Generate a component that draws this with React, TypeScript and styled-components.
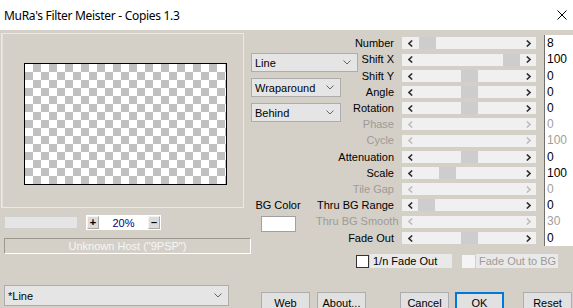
import React from "react";
import styled, { createGlobalStyle } from "styled-components";

const GlobalStyle = createGlobalStyle`
  html, body { margin: 0; padding: 0; background: #d4d0c8; }
  body { font-family: "Liberation Sans", Arial, sans-serif; font-size: 11px; color: #000; }
`;

const Window = styled.div`
  width: 573px;
  height: 308px;
  overflow: hidden;
  display: flex;
  flex-direction: column;
  background: #d4d0c8;
`;

const TitleBar = styled.div`
  height: 30px;
  flex: none;
  background: #fff;
  display: flex;
  align-items: center;
  padding-left: 4px;
  font-family: "Noto Sans", "Open Sans", sans-serif;
  font-size: 12px;
  letter-spacing: -0.3px;
  color: #000;
`;

const CloseBox = styled.div`
  margin-left: auto;
  width: 22px;
  height: 30px;
  display: flex;
  align-items: center;
  justify-content: center;
`;

const Body = styled.div`
  flex: 1;
  display: flex;
`;

const LeftColumn = styled.div`
  width: 251px;
  flex: none;
  display: flex;
  flex-direction: column;
  padding-top: 3px;
  padding-left: 1px;
  box-sizing: border-box;
`;

const GroupBox = styled.div`
  width: 243px;
  height: 175px;
  box-sizing: border-box;
  border: 1px solid #ebe9e5;
  box-shadow: inset 3px 0 0 -2px #e4e1dc;
  padding: 29px 0 0 22px;
`;

const Preview = styled.div`
  width: 203px;
  height: 122px;
  box-sizing: border-box;
  border: 1px solid #000;
  background: repeating-conic-gradient(#c0c0c0 0 25%, #fff 0 50%) 0 0 / 16px 16px;
`;

const ZoomRow = styled.div`
  display: flex;
  align-items: center;
  margin-top: 7px;
  padding-left: 3px;
  gap: 8px;
  height: 15px;
`;

const LightField = styled.div`
  width: 74px;
  height: 13px;
  box-sizing: border-box;
  background: #e5e5e5;
  border: 1px solid #d0d0d0;
`;

const ZoomBox = styled.div`
  width: 75px;
  height: 15px;
  box-sizing: border-box;
  background: #fff;
  display: flex;
  align-items: center;
  padding: 0 1px;
`;

const ZoomButton = styled.div`
  width: 12px;
  height: 13px;
  box-sizing: border-box;
  background: #dcdcdc;
  border: 1px solid #a8a8a8;
  border-top-color: #f4f4f4;
  border-left-color: #f4f4f4;
  display: flex;
  align-items: center;
  justify-content: center;
  font-size: 11px;
  font-weight: bold;
  line-height: 1;
`;

const ZoomText = styled.span`
  flex: 1;
  text-align: center;
  color: #000080;
  font-size: 11px;
`;

const HostBar = styled.div`
  margin-top: 8px;
  margin-left: 3px;
  width: 247px;
  height: 16px;
  box-sizing: border-box;
  border: 1px solid #fff;
  border-top-color: #9c9890;
  border-left-color: #9c9890;
  display: flex;
  align-items: center;
  justify-content: center;
  color: #f6f6f6;
  font-size: 11px;
`;

const Spacer = styled.div`
  flex: 1;
`;

const ComboBox = styled.div<{ $width: number; $height: number }>`
  width: ${(p) => p.$width}px;
  height: ${(p) => p.$height}px;
  flex: none;
  box-sizing: border-box;
  background: #e5e5e5;
  border: 1px solid #adadad;
  display: flex;
  align-items: center;
  padding: 0 6px 0 3px;
  font-size: 11px;
  color: #000;
`;

const BottomCombo = styled(ComboBox)`
  margin-left: 3px;
  margin-bottom: 8px;
`;

const ComboText = styled.span`
  flex: 1;
`;

const RightPane = styled.div`
  flex: 1;
  display: flex;
  flex-direction: column;
`;

const TopSection = styled.div`
  display: flex;
`;

const MidColumn = styled.div`
  width: 65px;
  flex: none;
  display: flex;
  flex-direction: column;
  align-items: flex-start;
  padding-top: 23px;
  gap: 6px;
  position: relative;
  z-index: 1;
`;

const BGGroup = styled.div`
  margin-top: 70px;
  margin-left: 3px;
  width: 48px;
  display: flex;
  flex-direction: column;
  align-items: center;
  gap: 4px;
`;

const BGLabel = styled.div`
  font-size: 11px;
  line-height: 14px;
  white-space: nowrap;
`;

const ColorSwatch = styled.div`
  width: 35px;
  height: 16px;
  box-sizing: border-box;
  background: #fff;
  border: 1px solid #a0a0a0;
`;

const ControlsGrid = styled.div`
  margin-top: 5px;
  display: grid;
  grid-template-columns: 86px 134px 37px;
  grid-template-rows: 16px 17px 16px 16px 16px 16px 17px 16px 16px 16px 16px 17px 16px;
`;

const Label = styled.div<{ $disabled?: boolean }>`
  text-align: right;
  padding-right: 8px;
  white-space: nowrap;
  font-size: 11px;
  line-height: 16px;
  color: ${(p) => (p.$disabled ? "#9d9b97" : "#000")};
`;

const Track = styled.div`
  align-self: center;
  height: 12px;
  display: flex;
  background: #f0f0f0;
`;

const ArrowCell = styled.div`
  width: 16px;
  flex: none;
  display: flex;
  align-items: center;
  justify-content: center;
`;

const Trough = styled.div`
  flex: 1;
  position: relative;
`;

const Thumb = styled.div`
  position: absolute;
  top: 0;
  bottom: 0;
  width: 17px;
  background: #cdcdcd;
`;

const ValueBox = styled.div<{ $disabled?: boolean }>`
  margin-left: 8px;
  background: #fff;
  border-left: 1px solid #6f6f6f;
  padding-left: 2px;
  font-size: 12px;
  line-height: 16px;
  color: ${(p) => (p.$disabled ? "#a0a0a0" : "#000")};
`;

const CheckRow = styled.div`
  display: flex;
  align-items: center;
  margin-top: 8px;
  padding-left: 105px;
  height: 14px;
`;

const CheckItem = styled.div<{ $offset: number }>`
  display: flex;
  align-items: center;
  margin-left: ${(p) => p.$offset}px;
`;

const CheckBox = styled.div<{ $disabled?: boolean }>`
  width: 13px;
  height: 13px;
  box-sizing: border-box;
  background: ${(p) => (p.$disabled ? "#f4f4f4" : "#fff")};
  border: 1px solid ${(p) => (p.$disabled ? "#f4f4f4" : "#333")};
`;

const CheckLabel = styled.div<{ $width: number; $disabled?: boolean }>`
  width: ${(p) => p.$width}px;
  height: 14px;
  margin-left: 1px;
  background: #e9e9e9;
  padding-left: 3px;
  box-sizing: border-box;
  font-size: 11px;
  line-height: 14px;
  white-space: nowrap;
  color: ${(p) => (p.$disabled ? "#9d9b97" : "#000")};
`;

const ButtonRow = styled.div`
  display: flex;
  margin-top: 24px;
`;

const Button = styled.div<{ $offset: number; $default?: boolean }>`
  margin-left: ${(p) => p.$offset}px;
  width: 49px;
  height: 22px;
  flex: none;
  box-sizing: border-box;
  background: #e1e1e1;
  border: ${(p) => (p.$default ? "2px solid #0078d7" : "1px solid #adadad")};
  display: flex;
  align-items: center;
  justify-content: center;
  font-size: 11px;
  color: #000;
`;

const Chevron = () => (
  <svg width="8" height="5" viewBox="0 0 8 5">
    <polyline points="0.5,0.5 4,4 7.5,0.5" fill="none" stroke="#666" strokeWidth="1" />
  </svg>
);

const Arrow = ({ dir, disabled }: { dir: "left" | "right"; disabled?: boolean }) => (
  <svg width="5" height="7" viewBox="0 0 5 7">
    <polyline
      points={dir === "left" ? "4.2,0.5 1,3.5 4.2,6.5" : "0.8,0.5 4,3.5 0.8,6.5"}
      fill="none"
      stroke={disabled ? "#bdbdbd" : "#303030"}
      strokeWidth="1.6"
    />
  </svg>
);

type Row = { label: string; pos: number | null; value: string };

const rows: Row[] = [
  { label: "Number", pos: 0.012, value: "8" },
  { label: "Shift X", pos: 1, value: "100" },
  { label: "Shift Y", pos: 0.5, value: "0" },
  { label: "Angle", pos: 0.5, value: "0" },
  { label: "Rotation", pos: 0.5, value: "0" },
  { label: "Phase", pos: null, value: "0" },
  { label: "Cycle", pos: null, value: "100" },
  { label: "Attenuation", pos: 0.5, value: "0" },
  { label: "Scale", pos: 0.25, value: "100" },
  { label: "Tile Gap", pos: null, value: "0" },
  { label: "Thru BG Range", pos: 0, value: "0" },
  { label: "Thru BG Smooth", pos: null, value: "30" },
  { label: "Fade Out", pos: 0.5, value: "0" },
];

const Slider = ({ pos }: { pos: number | null }) => {
  const disabled = pos === null;
  return (
    <Track>
      <ArrowCell>
        <Arrow dir="left" disabled={disabled} />
      </ArrowCell>
      <Trough>{!disabled && <Thumb style={{ left: Math.round(pos * 85) }} />}</Trough>
      <ArrowCell>
        <Arrow dir="right" disabled={disabled} />
      </ArrowCell>
    </Track>
  );
};

export default function App() {
  return (
    <>
      <GlobalStyle />
      <Window>
        <TitleBar>
          MuRa's Filter Meister - Copies 1.3
          <CloseBox>
            <svg width="10" height="10" viewBox="0 0 10 10">
              <path d="M0.5 0.5 L9.5 9.5 M9.5 0.5 L0.5 9.5" stroke="#000" strokeWidth="1" />
            </svg>
          </CloseBox>
        </TitleBar>
        <Body>
          <LeftColumn>
            <GroupBox>
              <Preview />
            </GroupBox>
            <ZoomRow>
              <LightField />
              <ZoomBox>
                <ZoomButton>+</ZoomButton>
                <ZoomText>20%</ZoomText>
                <ZoomButton>–</ZoomButton>
              </ZoomBox>
            </ZoomRow>
            <HostBar>Unknown Host ("9PSP")</HostBar>
            <Spacer />
            <BottomCombo $width={225} $height={21}>
              <ComboText>*Line</ComboText>
              <Chevron />
            </BottomCombo>
          </LeftColumn>
          <RightPane>
            <TopSection>
              <MidColumn>
                <ComboBox $width={107} $height={19}>
                  <ComboText>Line</ComboText>
                  <Chevron />
                </ComboBox>
                <ComboBox $width={90} $height={19}>
                  <ComboText>Wraparound</ComboText>
                  <Chevron />
                </ComboBox>
                <ComboBox $width={90} $height={19}>
                  <ComboText>Behind</ComboText>
                  <Chevron />
                </ComboBox>
                <BGGroup>
                  <BGLabel>BG Color</BGLabel>
                  <ColorSwatch />
                </BGGroup>
              </MidColumn>
              <ControlsGrid>
                {rows.map((r) => (
                  <React.Fragment key={r.label}>
                    <Label $disabled={r.pos === null}>{r.label}</Label>
                    <Slider pos={r.pos} />
                    <ValueBox $disabled={r.pos === null}>{r.value}</ValueBox>
                  </React.Fragment>
                ))}
              </ControlsGrid>
            </TopSection>
            <CheckRow>
              <CheckItem $offset={0}>
                <CheckBox />
                <CheckLabel $width={82}>1/n Fade Out</CheckLabel>
              </CheckItem>
              <CheckItem $offset={10}>
                <CheckBox $disabled />
                <CheckLabel $width={82} $disabled>
                  Fade Out to BG
                </CheckLabel>
              </CheckItem>
            </CheckRow>
            <ButtonRow>
              <Button $offset={10}>Web</Button>
              <Button $offset={7}>About...</Button>
              <Button $offset={34}>Cancel</Button>
              <Button $offset={6} $default>
                OK
              </Button>
              <Button $offset={19}>Reset</Button>
            </ButtonRow>
          </RightPane>
        </Body>
      </Window>
    </>
  );
}
